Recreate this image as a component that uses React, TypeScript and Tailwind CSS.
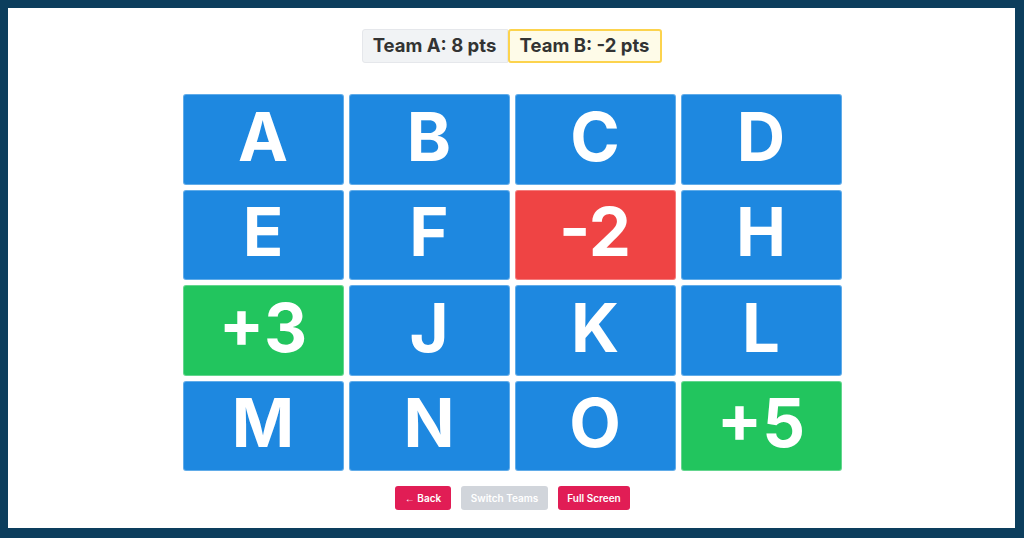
import React from "react";

type Tile = { label: string; kind: "hidden" | "plus" | "minus" };

const tiles: Tile[] = [
  { label: "A", kind: "hidden" },
  { label: "B", kind: "hidden" },
  { label: "C", kind: "hidden" },
  { label: "D", kind: "hidden" },
  { label: "E", kind: "hidden" },
  { label: "F", kind: "hidden" },
  { label: "-2", kind: "minus" },
  { label: "H", kind: "hidden" },
  { label: "+3", kind: "plus" },
  { label: "J", kind: "hidden" },
  { label: "K", kind: "hidden" },
  { label: "L", kind: "hidden" },
  { label: "M", kind: "hidden" },
  { label: "N", kind: "hidden" },
  { label: "O", kind: "hidden" },
  { label: "+5", kind: "plus" },
];

const tileColor = {
  hidden: "bg-[#1e88e0]",
  plus: "bg-[#22c55e]",
  minus: "bg-[#ef4444]",
};

export default function App() {
  return (
    <div
      className="h-[538px] w-full bg-[#0c3e5d] pt-[8px] pl-[8px] pr-[9px] pb-[10px]"
      style={{ fontFamily: "Inter, 'Liberation Sans', sans-serif" }}
    >
      <div className="flex h-full flex-col items-center bg-white">
        {/* Scoreboard */}
        <div className="mt-[21px] flex">
          <div className="flex h-[34px] w-[146px] items-center justify-center rounded-l-[3px] border border-[#e5e7eb] bg-[#f1f3f5] text-[18.5px] font-bold text-[#333]">
            Team A: 8 pts
          </div>
          <div className="flex h-[34px] w-[154px] items-center justify-center rounded-[3px] border-2 border-[#fcd34d] bg-[#fefbe8] text-[18.5px] font-bold text-[#333]">
            Team B: -2 pts
          </div>
        </div>

        {/* Board */}
        <div className="mt-[31px] grid h-[377px] grid-cols-[repeat(4,161px)] grid-rows-4 gap-[5px] pl-[1px]">
          {tiles.map((t) => (
            <div
              key={t.label}
              className={`flex items-center justify-center rounded-[3px] border border-white/30 ${tileColor[t.kind]} pb-[6px] text-[67px] font-bold leading-none text-white`}
            >
              {t.label}
            </div>
          ))}
        </div>

        {/* Controls */}
        <div className="mt-[15px] flex gap-[10px] pl-[2px]">
          <button className="h-[24px] w-[56px] rounded-[3px] bg-[#e11d55] text-[10px] font-semibold text-white">
            <span className="font-['Liberation_Sans'] font-normal">←</span> Back
          </button>
          <button className="h-[24px] w-[87px] rounded-[3px] bg-[#d1d5db] text-[10px] font-semibold text-white">
            Switch Teams
          </button>
          <button className="h-[24px] w-[72px] rounded-[3px] bg-[#e11d55] text-[10px] font-semibold text-white">
            Full Screen
          </button>
        </div>
      </div>
    </div>
  );
}
